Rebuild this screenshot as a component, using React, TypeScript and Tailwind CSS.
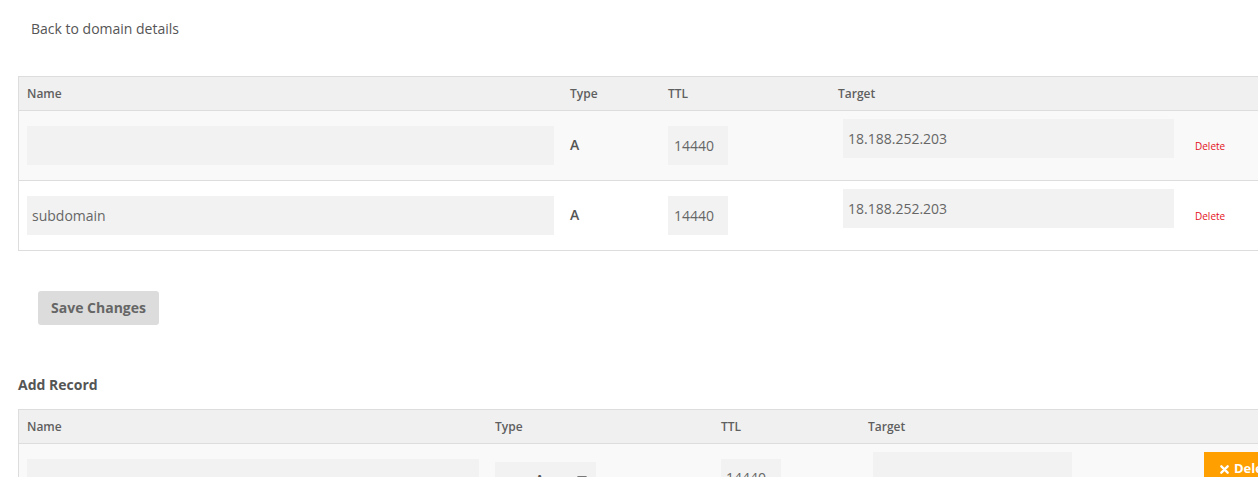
import React from "react";

const font = { fontFamily: '"Open Sans", "Liberation Sans", sans-serif' };

function Row({ name, bg }: { name: string; bg: string }) {
  return (
    <div className={`grid grid-cols-[542px_98px_170px_357px_1fr] h-[70px] border-b border-[#dddddd] ${bg}`}>
      <div className="pl-[8px] pt-[15px]">
        <div className="w-[527px] h-[39px] bg-[#f2f2f2] pl-[5px] flex items-center text-[14px] text-[#666]">{name}</div>
      </div>
      <div className="pl-[9px] pt-[24px] text-[14px] font-semibold leading-[20px] text-[#555]">A</div>
      <div className="pl-[9px] pt-[15px]">
        <div className="w-[60px] h-[39px] bg-[#f2f2f2] pl-[6px] flex items-center text-[14px] text-[#666]">14440</div>
      </div>
      <div className="pl-[14px] pt-[8px]">
        <div className="w-[331px] h-[39px] bg-[#f2f2f2] pl-[5px] flex items-center text-[14px] text-[#666]">18.188.252.203</div>
      </div>
      <div className="pl-[9px] pt-[28px] text-[10px] leading-[14px] text-[#e3101a]">Delete</div>
    </div>
  );
}

export default function App() {
  return (
    <div className="w-[1258px] h-[477px] overflow-hidden bg-white text-[#555]" style={font}>
      <div className="pl-[18px]">
        <div className="pl-[13px] pt-[19px] text-[14px] leading-[20px] text-[#555]">Back to domain details</div>

        <div className="mt-[37px] w-[1300px] border border-[#dddddd]">
          <div className="grid grid-cols-[542px_98px_170px_357px_1fr] h-[34px] items-center bg-[#f0f0f0] border-b border-[#dddddd] text-[12px] font-semibold text-[#5f5f5f]">
            <div className="pl-[8px]">Name</div>
            <div className="pl-[9px]">Type</div>
            <div className="pl-[9px]">TTL</div>
            <div className="pl-[9px]">Target</div>
            <div></div>
          </div>
          <Row name="" bg="bg-[#f9f9f9]" />
          <div className="-mb-px">
            <Row name="subdomain" bg="bg-white" />
          </div>
        </div>

        <button className="mt-[40px] ml-[20px] h-[34px] w-[121px] rounded-[3px] bg-[#dcdcdc] pb-px text-[14px] font-bold text-[#666]">
          Save Changes
        </button>

        <div className="mt-[50px] text-[14px] font-bold leading-[20px] text-[#555]">Add Record</div>

        <div className="mt-[14px] w-[1300px] border border-[#dddddd]">
          <div className="grid grid-cols-[467px_226px_147px_336px_1fr] h-[34px] items-center bg-[#f0f0f0] border-b border-[#dddddd] text-[12px] font-semibold text-[#5f5f5f]">
            <div className="pl-[8px]">Name</div>
            <div className="pl-[9px]">Type</div>
            <div className="pl-[9px]">TTL</div>
            <div className="pl-[9px]">Target</div>
            <div></div>
          </div>
          <div className="grid grid-cols-[467px_226px_147px_336px_1fr] h-[80px] bg-[#f9f9f9]">
            <div className="pl-[8px] pt-[15px]">
              <div className="w-[452px] h-[39px] bg-[#f2f2f2]"></div>
            </div>
            <div className="pl-[9px] pt-[18px]">
              <div className="relative w-[101px] h-[36px] bg-[#f2f2f2] text-[14px] font-semibold text-[#555]">
                <span className="absolute left-[40px] top-[8px] leading-[20px]">A</span>
                <svg className="absolute left-[82px] top-[13px]" width="10" height="8" viewBox="0 0 10 8">
                  <path d="M0 1h10L5 7z" fill="#777" />
                </svg>
              </div>
            </div>
            <div className="pl-[9px] pt-[15px]">
              <div className="w-[60px] h-[39px] bg-[#f2f2f2] pl-[5px] pt-[9px] text-[14px] leading-[20px] text-[#666]">14440</div>
            </div>
            <div className="pl-[14px] pt-[8px]">
              <div className="w-[199px] h-[39px] bg-[#f2f2f2]"></div>
            </div>
            <div className="pl-[9px] pt-[8px]">
              <div className="inline-flex items-center gap-[5px] h-[34px] px-[16px] bg-[#ff9f00] text-white text-[13px] font-bold">
                <svg width="9" height="9" viewBox="0 0 10 10">
                  <path d="M1.5 1.5l7 7M8.5 1.5l-7 7" stroke="#fff" strokeWidth="2.6" strokeLinecap="round" />
                </svg>
                Delete
              </div>
            </div>
          </div>
        </div>
      </div>
    </div>
  );
}
